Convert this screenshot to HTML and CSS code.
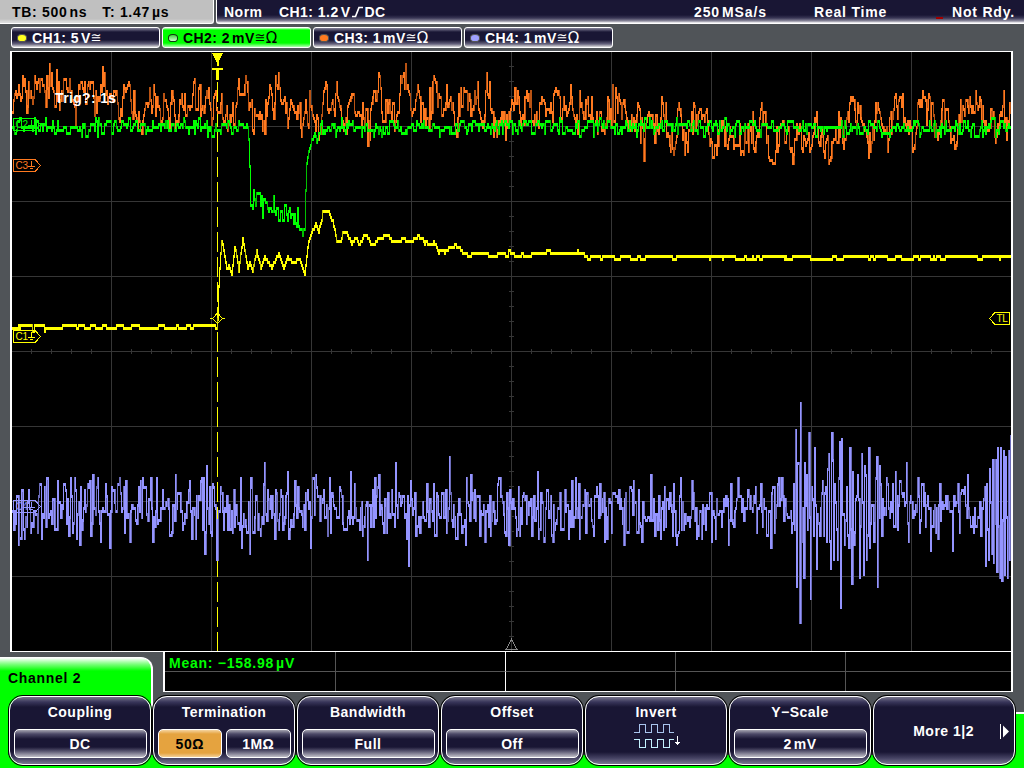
FILE: index.html
```html
<!DOCTYPE html>
<html lang="en">
<head>
<meta charset="utf-8">
<title>Oscilloscope</title>
<link rel="stylesheet" href="styles.css">
</head>
<body>
<header class="status">
  <div class="timebase"><span>TB: 500<i></i>ns</span><span>T: 1.47<i></i>µs</span></div>
  <div class="trigger">
    <span class="mode">Norm</span>
    <span class="source">CH1: 1.2<i></i>V<svg class="edge" width="11" height="12" viewBox="0 0 11 12"><path d="M0 10.500H3.500L7 1.500H11" fill="none" stroke="#fff" stroke-width="1.700"/></svg>DC</span>
    <span class="rate">250<i></i>MSa/s</span>
    <span class="acq">Real Time</span>
    <b class="cursor"></b>
    <span class="state">Not Rdy.</span>
  </div>
</header>
<nav class="channels">
  <div class="channel"><b class="led yellow"></b><span>CH1: 5<i></i>V</span><em>≅</em></div>
  <div class="channel selected"><b class="led green"></b><span>CH2: 2<i></i>mV</span><em>≅</em><u>Ω</u></div>
  <div class="channel"><b class="led orange"></b><span>CH3: 1<i></i>mV</span><em>≅</em><u>Ω</u></div>
  <div class="channel"><b class="led violet"></b><span>CH4: 1<i></i>mV</span><em>≅</em><u>Ω</u></div>
</nav>
<main class="plot">
  <svg class="scope" width="999" height="599" viewBox="12 52 999 599" shape-rendering="crispEdges">
    <path id="grid" stroke="#363636" fill="none"/>
    <path d="M217.500 82V651" stroke="#ffff00" stroke-dasharray="20 5"/>
    <g id="traces"></g>
    <path d="M506 649.500H517L511.500 639.500Z" fill="none" stroke="#888"/>
    <g fill="none">
      <path d="M13.500 118.500H35L40.500 124.500L35 130.500H13.500Z" stroke="#00ff00"/>
      <path d="M13.500 159.500H35L40.500 165.500L35 171.500H13.500Z" stroke="#ff7a20"/>
      <path d="M13.500 330.500H35L40.500 336.500L35 342.500H13.500Z" stroke="#ffff00"/>
      <path d="M13.500 500.500H35L40.500 506.500L35 512.500H13.500Z" stroke="#9494ff"/>
      <path d="M31.500 120V125M28 125.500H35M30 127.500H33" stroke="#00ff00"/>
      <path d="M31.500 161V166M28 166.500H35M30 168.500H33" stroke="#ff7a20"/>
      <path d="M31.500 332V337M28 337.500H35M30 339.500H33" stroke="#ffff00"/>
      <path d="M31.500 502V507M28 507.500H35M30 509.500H33" stroke="#9494ff"/>
      <path d="M1009.500 312.500H995L989.500 318.500L995 324.500H1009.500Z" stroke="#ffff00"/>
      <path d="M217.500 313L222.500 318.500L217.500 323.500L212.500 318.500ZM210 318.500H213M222 318.500H225" stroke="#ffff00"/>
    </g>
    <g class="tags">
      <text x="15.500" y="128" fill="#00ff00">C2</text>
      <text x="15.500" y="169" fill="#ff7a20">C3</text>
      <text x="15.500" y="340" fill="#ffff00">C1</text>
      <text x="15.500" y="510" fill="#9494ff">C4</text>
      <text x="996.500" y="322" fill="#ffff00">TL</text>
    </g>
    <path d="M212 53H223L218.500 62V66H216.500V62Z M212 68H223V70H219V80H216V70H212Z" fill="#ffff00"/>
    <text class="overlay" x="55" y="103">Trig?: 1s</text>
  </svg>
</main>
<section class="readout">
  <div class="tab">Channel 2</div>
  <div class="measures">
    <div class="measure"><span>Mean: −158.98<i></i>µV</span></div><div></div><div class="mid"></div><div></div><div></div>
    <div></div><div></div><div class="mid"></div><div></div><div></div>
  </div>
</section>
<footer class="softkeys">
  <div class="key"><span>Coupling</span><div class="values"><b>DC</b></div></div>
  <div class="key"><span>Termination</span><div class="values"><b class="on">50Ω</b><b>1MΩ</b></div></div>
  <div class="key"><span>Bandwidth</span><div class="values"><b>Full</b></div></div>
  <div class="key"><span>Offset</span><div class="values"><b>Off</b></div></div>
  <div class="key"><span>Invert</span>
    <svg class="invert" width="48" height="26" viewBox="0 0 48 26" fill="none" shape-rendering="crispEdges"><path d="M0 9.500H5.500V1.500H11.500V9.500H17.500V1.500H23.500V9.500H29.500V1.500H35.500V9.500H40" stroke="#a9c5ee"/><path d="M0 16.500H5.500V24.500H11.500V16.500H17.500V24.500H23.500V16.500H29.500V24.500H35.500V16.500H40" stroke="#c4f2ff"/><path d="M43.500 13V22M41 19.500H46M42 20.500H45" stroke="#fff"/></svg>
  </div>
  <div class="key"><span>Y−Scale</span><div class="values"><b>2<i></i>mV</b></div></div>
  <div class="key more"><span>More 1|2</span><svg width="9" height="15" viewBox="0 0 9 15"><path d="M.5 0V15" stroke="#fff"/><path d="M3 1.500L9 7.500L3 13.500Z" fill="#fff"/></svg></div>
</footer>
<script src="scope.js"></script>
</body>
</html>
```

FILE: styles.css
```css
* { box-sizing: border-box; }
body {
  margin: 0;
  width: 1024px;
  height: 768px;
  overflow: hidden;
  display: flex;
  flex-direction: column;
  background: #505458;
  color: #fff;
  font: bold 14px/16px "Liberation Sans", Arial, sans-serif;
  letter-spacing: .5px;
  white-space: nowrap;
}
i { display: inline-block; width: 2px; }
.status { display: flex; height: 24px; gap: 2px; background: #505458; }
.timebase {
  width: 214px;
  display: flex;
  gap: 15px;
  padding: 4px 0 0 12px;
  color: #000;
  letter-spacing: .7px;
  background: linear-gradient(#c0c0c0 19px, #ddd 22px);
  border-right: 1px solid #fff;
  border-bottom: 1px solid #fff;
  border-radius: 0 0 3px 0;
}
.trigger {
  flex: 1;
  display: grid;
  grid-template-columns: 55px 415px 120px 122px 16px 1fr;
  padding: 4px 0 0 7px;
  letter-spacing: .5px;
  background: linear-gradient(#191634 15px, #3a3756 18px, #8c8a9c 21px, #fff 23px);
  border-left: 1px solid #fff;
  border-bottom: 1px solid #fff;
  border-radius: 0 0 0 3px;
}
.source { letter-spacing: .45px; }
.rate { letter-spacing: .9px; }
.acq { letter-spacing: .8px; }
.state { letter-spacing: .8px; }
.cursor { width: 7px; height: 2px; margin-top: 13px; background: #a00000; }
.edge { margin: 0 1px -1px 2px; }
.channels { display: flex; gap: 2px; padding: 3px 0 3px 11px; }
.channel {
  width: 149px;
  height: 21px;
  display: flex;
  align-items: center;
  padding-left: 5px;
  letter-spacing: .45px;
  border: 1px solid #fff;
  border-radius: 3px;
  background: linear-gradient(#85839a, #191634 4px, #191634 12px, #66637d 16px, #ddd 19px);
}
.selected { color: #000; background: linear-gradient(#c5ffc5, #00ff00 2px, #00ff00 15px, #b0ffb0 19px); }
.channel em { font: normal 13px/16px "DejaVu Sans", sans-serif; letter-spacing: 0; }
.channel u { font: normal 15px/16px "DejaVu Sans", sans-serif; letter-spacing: 0; text-decoration: none; }
.led { width: 10px; height: 8px; margin-right: 5px; border: 1px solid #555; border-radius: 45%; }
.yellow { background: #ffff20; }
.green { background: linear-gradient(#40d040, #d0ffd0); border-color: #123812; }
.orange { background: #ff7a20; }
.violet { background: #a0a0ff; }
.plot {
  width: 1003px;
  height: 601px;
  margin-left: 10px;
  background: #000;
  border: solid #fff;
  border-width: 1px 2px;
  flex: none;
}
.scope { display: block; }
.overlay { font: bold 14px "Liberation Sans", Arial, sans-serif; fill: #fff; letter-spacing: .35px; }
.tags { font: normal 10px "Liberation Sans", Arial, sans-serif; letter-spacing: -.3px; }
.readout { display: flex; height: 44px; gap: 10px; }
.tab {
  width: 153px;
  height: 60px;
  margin-top: 5px;
  padding: 12px 0 0 8px;
  color: #000;
  letter-spacing: .7px;
  border-top: 1px solid #fff;
  border-right: 2px solid #fff;
  border-radius: 0 12px 0 0;
  background: linear-gradient(#fff, #80ff80 6px, #00ff00 13px);
}
.measures {
  width: 850px;
  height: 40px;
  display: grid;
  grid-template: 20px 19px / 171px 170px 170px 170px 1fr;
  background: #000;
  border: solid #fff;
  border-width: 0 2px 1px;
  color: #00ff00;
}
.measures div { border-right: 1px solid #555; border-bottom: 1px solid #555; }
.measures div:nth-child(n+6) { border-bottom: 0; }
.measures div:nth-child(5n) { border-right: 0; }
.measures div:nth-child(5n+2) { border-right-color: #fff; }
.measures .measure { padding: 3px 0 0 4px; letter-spacing: .75px; }
.softkeys {
  position: relative;
  display: flex;
  flex: none;
  gap: 2px;
  height: 72px;
  padding: 0 0 3px 9px;
  background:
    linear-gradient(#00ff00, #00ff00) 0 0 / 8px 100% no-repeat,
    linear-gradient(transparent 16px, #fff 16px, #fff 18px, #00ff00 18px) 100% 0 / 9px 100% no-repeat,
    linear-gradient(#00ff00, #00ff00) 0 100% / 100% 13px no-repeat;
}
.key {
  width: 142px;
  height: 69px;
  display: flex;
  flex-direction: column;
  align-items: center;
  padding-top: 7px;
  border: 1.5px solid #fff;
  border-radius: 14px;
  box-shadow: 0 0 0 1px #000;
  background: linear-gradient(#77758c, #39365a 5px, #191634 10px, #191634 55px, #444162 61px, #85839a 68px);
}
.values { display: flex; gap: 4px; width: 133px; margin-top: 9px; }
.values b {
  flex: 1;
  height: 29px;
  text-align: center;
  padding-top: 6px;
  border: 1px solid #fff;
  border-radius: 5px;
  background: linear-gradient(#a5a4b0, #4c4967 4px, #191634 9px, #191634 17px, #55526d 21px, #c0bfc8 27px);
}
.values b.on { color: #000; background: linear-gradient(#f5d4a0, #e5a33f 4px, #e5a33f 23px, #f2cf98); }
.invert { margin: 3px 0 0 3px; }
.more { flex-direction: row; justify-content: flex-end; padding: 1px 5px 0 0; }
.more svg { margin-left: 26px; }
```

FILE: scope.js
```js
// Graticule: 10 x 8 divisions with centre-axis ticks
let g = '';
for (let x = 111; x < 1000; x += 100) g += `M${x + .5} 52V651`;
for (let y = 126; y < 600; y += 75) g += `M12 ${y + .5}H1011`;
for (let x = 31; x < 1011; x += 20) g += `M${x + .5} 349V354`;
for (let y = 66; y < 650; y += 15) g += `M509 ${y + .5}H514`;
document.getElementById('grid').setAttribute('d', g);

let seed = 9137;
const rnd = () => (seed = (seed * 16807) % 2147483647) / 2147483647;

const parse = s => s.trim().split(/\s+/).map(p => p.split(',').map(Number));

// Draws one column per pixel, in 3px vertical quantisation steps.
// wide: share of bars that spill into the next column.
// hold: chance that a noise sample lasts another column.
function trace(points, noise, color, dim, { base, wide = 0, hold = 0 } = {}) {
  const exact = new Map(points.map(p => [Math.round(p[0]), p[1]]));
  let i = 0, prev = null, n = 0, bright = '', dark = '';
  for (let x = 12; x < 1011; x++) {
    while (i < points.length - 2 && points[i + 1][0] <= x) i++;
    const [x0, y0] = points[i], [x1, y1] = points[i + 1];
    const t = Math.max(0, Math.min(1, (x - x0) / (x1 - x0)));
    const centre = base === undefined ? y0 + (y1 - y0) * t : base;
    if (rnd() >= hold) n = (rnd() + rnd() - 1) * noise(x);
    let y = exact.has(x) ? exact.get(x) : centre + n;
    y = Math.floor(y / 3) * 3;
    if (prev === null) prev = y;
    const top = Math.min(y, prev), bottom = Math.max(y, prev) + 3;
    const spill = rnd() < wide;
    if (spill) dark += `M${x + 1} ${top}h1V${bottom}h-1Z`;
    const bar = `M${x} ${top}h1V${bottom}h-1Z`;
    if (!spill && bottom - top > 6 && rnd() < .35) dark += bar; else bright += bar;
    prev = y;
  }
  document.getElementById('traces').insertAdjacentHTML('beforeend',
    `<path d="${dark}" fill="${dim}"/><path d="${bright}" fill="${color}"/>`);
}

const ch4 = parse(`
18,543 24,537 28,489 41,537 44,487 56,529 68,535 75,490 79,543 84,490 89,481 90,534
97,478 100,540 109,546 119,478 125,481 129,540 140,481 142,478 152,540
156,478 162,490 171,531 175,475 182,529 189,481 191,538 201,478 204,552 206,466 212,484 216,558 220,487
223,529 240,478 241,546 249,552 250,478 264,463 287,471 288,538 310,547 315,475 330,532
350,472 367,558 378,475 395,462 408,564 410,480 433,485 449,457 470,475
490,535 508,543 537,473 543,541 560,530 575,478 599,484 606,538 641,542 650,476
673,484 676,544 711,540 730,483 755,487 770,547 781,478 793,484
795,430 796,585 797,463 798,463 799,622 800,403 801,541 803,577 804,463 805,505 808,433 810,598 811,487 814,448 816,568
818,522 822,481 823,534 826,540 828,454 829,541 830,568 831,433 832,460 833,559 834,484 837,559 839,442 840,607 841,439
844,544 846,487 848,547 849,448 851,583 852,472 854,532 857,475 859,577 861,454 863,574 864,466 866,559 868,448 869,547
873,540 876,457 877,586 879,466 881,535 886,478 895,472 897,529 906,463 908,541 922,484 930,550
937,538 939,484 952,550 957,484 967,475 973,532 980,535 985,565 986,484 988,559 989,469 991,553 992,460 993,562 995,460
996,571 997,448 999,577 1000,448 1001,580 1003,451 1004,574 1005,457 1007,577 1008,451 1009,559 1010,436`);

const ch3 = parse(`
12,112 15,90 18,85 20,100 23,86 26,112 28,82 31,98 34,76 37,82 39,92 41,80 44,90 47,88 49,64 50,85 53,90 58,82 60,100
69,79 72,100 75,124 76,98 79,87 86,102 92,82 94,114 100,85 103,85 107,104 110,95 117,104 120,110 124,88 127,86 130,100
138,112 142,120 145,103 150,100 153,85 160,120 163,95 168,118 172,98 176,122 181,95 187,105 192,93 198,88 202,105 206,92
212,118 220,104 228,120 233,124 237,88 244,85 248,108 258,118 263,122 268,98 273,117 276,85 280,100 284,96 288,117
290,100 300,126 305,100 318,138 323,92 330,110 335,95 345,118 352,95 358,112 368,122 374,92 380,88 384,120 390,112
395,120 403,73 406,88 410,110 416,95 420,120 426,118 434,79 437,105 442,115 450,97 455,130 460,88 465,92 470,115 476,97
480,118 485,91 492,112 498,128 507,126 511,100 517,91 521,118 528,94 532,120 537,125 543,100 545,115 551,112 556,91
560,120 563,97 566,115 571,97 575,120 581,104 587,97 592,118 600,112 605,125 610,110 616,97 623,101 630,130 636,115
644,140 650,115 658,134 662,103 670,150 677,110 684,153 690,125 698,112 706,109 709,145 718,144 722,126 726,144 738,144
750,128 755,143 764,112 766,143 775,150 780,125 791,147 800,130 805,145 815,120 824,156 831,143 840,118 844,140 851,100
858,112 865,130 870,150 877,103 881,125 888,138 893,110 899,97 905,125 912,152 920,99 923,97 927,110 933,115 937,140
941,109 947,110 952,140 958,115 965,100 969,97 973,112 978,106 985,120 990,109 994,137 1002,106 1006,140 1010,112`);

const ch2 = parse(`
12,126 50,127 80,129 120,127 247,127 248,138 249,165 250,205 252,208 253,190 255,204 260,206 275,213 290,216 303,228
304,228 305,190 306,163 309,147 312,138 318,132 326,129 340,128 650,127 1010,128`);

const ch1 = parse(`
12,327.500 215,327.500 216,328 217,318 218,286 219,268 221,241 222,243 226,269 228,265 231,273 234,248 235,250 238,270 242,239
247,267 249,263 252,270 256,251 260,267 264,257 271,267 278,254 283,267 287,257 292,262 299,260 304,274 308,240 312,230
315,224 318,231 321,220 322,212 328,212 333,225 336,242 340,242 342,233 346,233 351,243 355,239 359,244 363,236 366,236
371,245 376,240 387,236 391,241 403,239 411,241 418,236 424,244 434,243 438,252 444,252 449,248 456,246 464,254 480,254
490,256 510,253 520,256 540,253 548,251 555,254 570,254 580,252 586,257.500 1010,257.500`);

trace(ch4, x => (x > 793 && x < 885 ? 50 : 36), '#9494ff', '#6c6cba', { base: 510, wide: .35, hold: .15 });
trace(ch3, () => 25, '#ff7a20', '#b95313', { wide: .15, hold: .3 });
trace(ch2, x => (x > 246 && x < 252 ? 0 : x > 252 && x < 304 ? 17 : x < 310 && x > 302 ? 0 : 10), '#00ff00', '#00c000', { hold: .3 });
trace(ch1, x => (x < 216 ? 3 : x < 330 ? 0 : 2), '#ffff00', '#c8c800', { hold: .7 });
```
